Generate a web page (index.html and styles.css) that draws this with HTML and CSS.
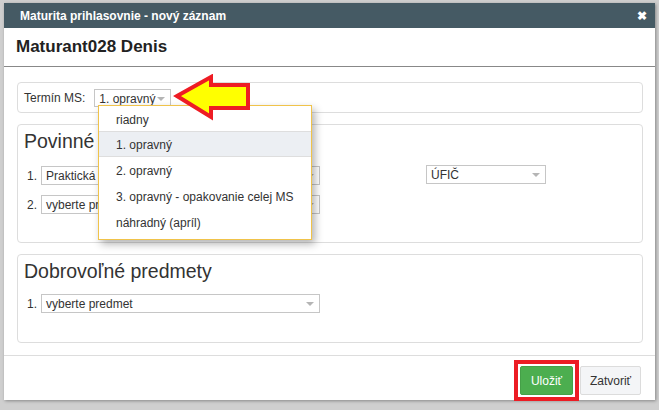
FILE: index.html
```html
<!DOCTYPE html>
<html lang="sk">
<head>
    <meta charset="UTF-8">
    <title>Maturita prihlasovnie</title>
    <link rel="stylesheet" href="styles.css">
</head>
<body>
    <div class="modal">
        <div class="modal-header">
            <span>Maturita prihlasovnie - nový záznam</span>
            <span class="close">&#10006;</span>
        </div>
        <div class="student">Maturant028 Denis</div>

        <div class="modal-body">
            <div class="panel panel-term">
                <label>Termín MS:</label>
                <div class="select select-term">1. opravný</div>
            </div>

            <div class="panel panel-req">
                <h2>Povinné predmety</h2>
                <div class="row">
                    <span class="num">1.</span>
                    <div class="select select-wide">Praktická časť odbornej zložky</div>
                    <div class="select select-small">ÚFIČ</div>
                </div>
                <div class="row">
                    <span class="num">2.</span>
                    <div class="select select-wide">vyberte predmet</div>
                </div>
            </div>

            <div class="panel panel-opt">
                <h2>Dobrovoľné predmety</h2>
                <div class="row">
                    <span class="num">1.</span>
                    <div class="select select-wide">vyberte predmet</div>
                </div>
            </div>
        </div>

        <div class="modal-footer">
            <span class="highlight"><button class="btn-save">Uložiť</button></span>
            <button class="btn-close">Zatvoriť</button>
        </div>

        <ul class="dropdown">
            <li>riadny</li>
            <li class="active">1. opravný</li>
            <li>2. opravný</li>
            <li>3. opravný - opakovanie celej MS</li>
            <li>náhradný (apríl)</li>
        </ul>

        <svg class="pointer" width="82" height="48" viewBox="0 0 82 48">
            <polygon points="4,22 38,3 38,11 75,11 75,34 38,34 38,43" fill="#ffff00" stroke="#ee1c24" stroke-width="4" stroke-linejoin="miter"/>
        </svg>
    </div>
</body>
</html>
```

FILE: styles.css
```css
* {
    box-sizing: border-box;
    margin: 0;
    padding: 0;
}

body {
    background: #cfcfcf;
    font-family: "Liberation Sans", Arial, sans-serif;
    padding: 3px 0 0 4px;
    height: 410px;
    overflow: hidden;
}

.modal {
    position: relative;
    width: 651px;
    height: 397px;
    background: white;
    box-shadow: 1px 1px 3px rgba(0,0,0,0.35);
}

.modal-header {
    height: 25px;
    background: #455a64;
    color: white;
    font-size: 12px;
    font-weight: bold;
    display: flex;
    align-items: center;
    justify-content: space-between;
    padding: 0 8px 0 16px;
}

.close {
    font-size: 12px;
}

.student {
    height: 39px;
    padding: 9px 0 0 12px;
    font-size: 17px;
    font-weight: bold;
    color: #222;
    border-bottom: 1px solid #888;
}

.modal-body {
    padding: 15px 12px 12px 13px;
    display: flex;
    flex-direction: column;
    gap: 11px;
    border-bottom: 1px solid #ddd;
}

.panel {
    border: 1px solid #ddd;
    border-radius: 4px;
}

.panel-term {
    height: 31px;
    display: flex;
    align-items: center;
    padding-left: 6px;
    font-size: 12px;
    color: #333;
}

.panel-term label {
    margin-right: 9px;
}

.panel h2 {
    font-size: 19.5px;
    font-weight: normal;
    color: #333;
    padding: 5px 0 0 6px;
    height: 41px;
}

.panel-req {
    height: 119px;
}

.panel-opt {
    height: 89px;
}

.panel-opt h2 {
    height: 39px;
}

.row {
    display: flex;
    align-items: center;
    padding-left: 9px;
    margin-bottom: 10px;
    font-size: 12px;
    color: #333;
}

.num {
    width: 14px;
}

.select {
    position: relative;
    height: 19px;
    border: 1px solid #c6c6c6;
    font-size: 12px;
    color: #333;
    padding: 2px 0 0 4px;
    white-space: nowrap;
    overflow: hidden;
}

.select::after {
    content: "";
    position: absolute;
    right: 5px;
    top: 7px;
    border-left: 4px solid transparent;
    border-right: 4px solid transparent;
    border-top: 4px solid #b5b5b5;
}

.select-term {
    width: 77px;
    height: 18px;
}

.select-wide {
    width: 279px;
    padding-right: 20px;
}

.select-small {
    width: 120px;
    margin-left: 106px;
    margin-top: -2px;
}

.modal-footer {
    display: flex;
    justify-content: flex-end;
    align-items: flex-start;
    gap: 1px;
    padding: 4px 14px 0 0;
}

.highlight {
    display: block;
    border: 4px solid #ec1c24;
    padding: 2px;
    background: white;
}

button {
    display: block;
    height: 29px;
    font-family: "Liberation Sans", Arial, sans-serif;
    font-size: 12px;
    border-radius: 2px;
    cursor: pointer;
}

.btn-save {
    width: 53px;
    background: #4cae4f;
    color: white;
    border: 1px solid #45a048;
}

.btn-close {
    width: 61px;
    margin-top: 6px;
    background: #f4f5f7;
    color: #333;
    border: 1px solid #dcdcdc;
}

.dropdown {
    position: absolute;
    left: 94px;
    top: 102px;
    width: 214px;
    list-style: none;
    background: white;
    border: 1px solid #f0c34a;
    box-shadow: 3px 4px 8px rgba(0,0,0,0.3);
    font-size: 12px;
    color: #333;
    padding-bottom: 4px;
}

.dropdown li {
    height: 26px;
    line-height: 26px;
    padding-left: 17px;
    border-top: 1px solid transparent;
}

.dropdown li:first-child {
    height: 25px;
}

.dropdown li.active {
    background: #eceff3;
    border-top: 1px solid #dedede;
    border-bottom: 1px solid #dedede;
}

.pointer {
    position: absolute;
    left: 169px;
    top: 71px;
}
```
